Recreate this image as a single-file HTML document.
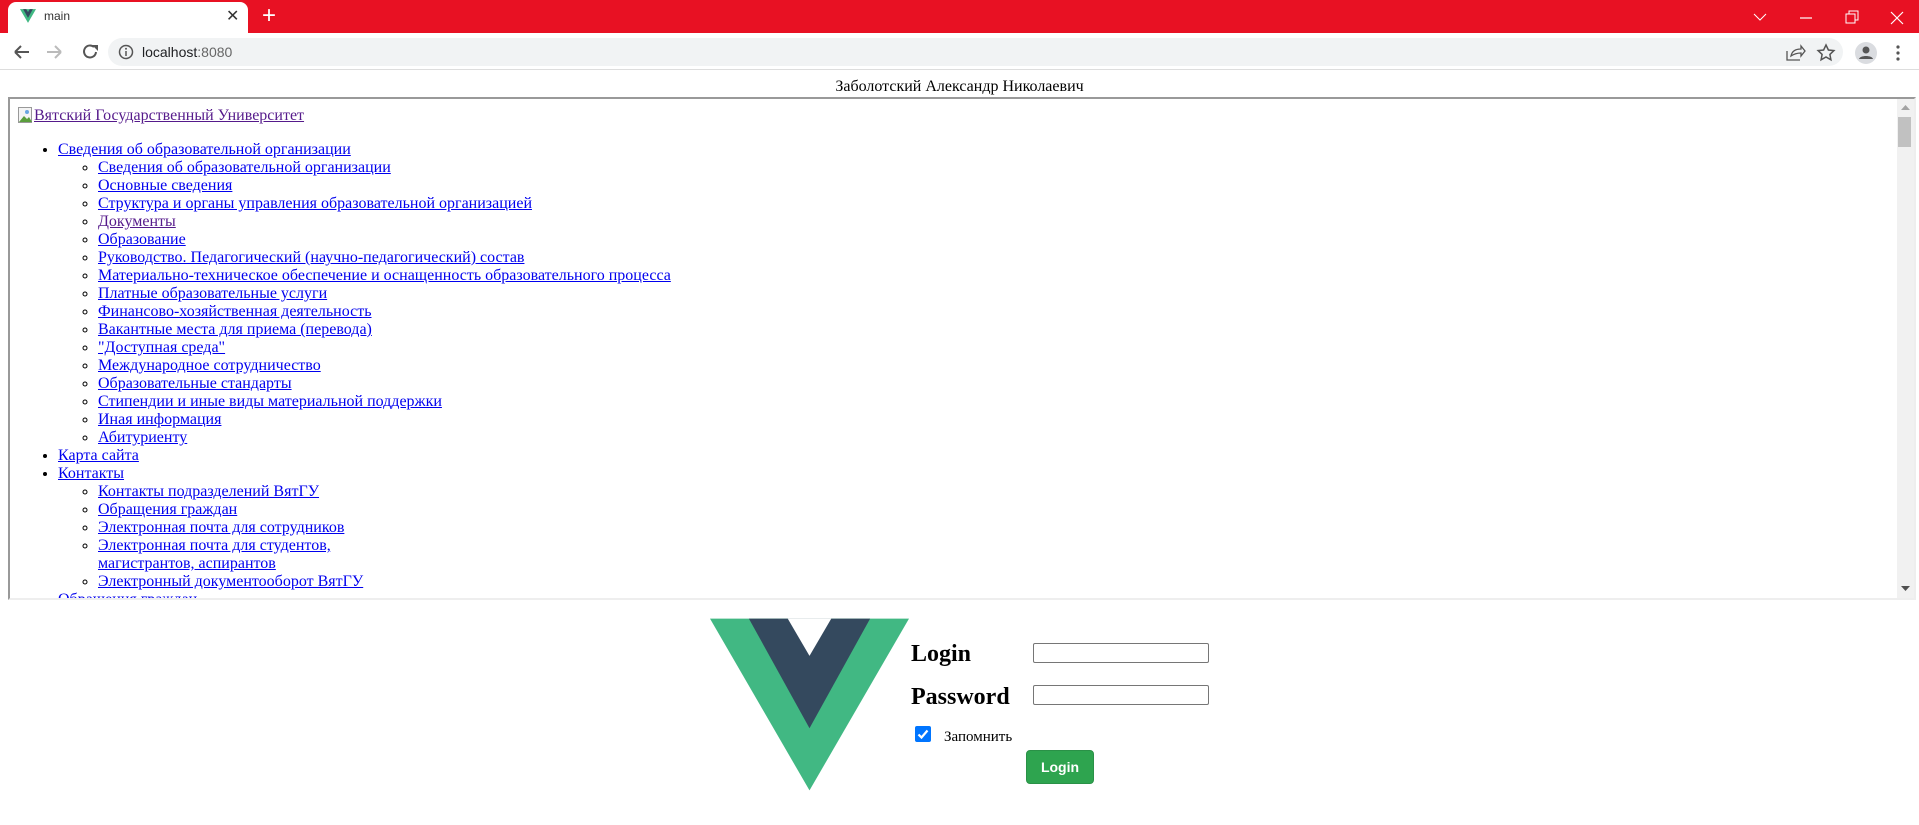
<!DOCTYPE html>
<html><head><meta charset="utf-8"><style>
*{box-sizing:border-box}
body{margin:0;width:1919px;height:825px;overflow:hidden;background:#fff;position:relative;font-family:"Liberation Serif",serif;font-size:16px}
.abs{position:absolute}
.chrome{font-family:"Liberation Sans",sans-serif}
a{color:#0000ee}
a.v{color:#551a8b}
ul{margin:0;padding-left:40px;line-height:18px}
.frame ul.top{margin:16px 0}
</style></head><body>
<div class="abs chrome" style="left:0;top:0;width:1919px;height:33px;background:#e81123"></div>
<div class="abs chrome" style="left:8px;top:2px;width:240px;height:32px;background:#fff;border-radius:8px 8px 0 0"></div>
<svg class="abs" style="left:20px;top:9px" width="16" height="14" viewBox="0 0 256 221"><path d="M0 0h256L128 221z" fill="#41b883"/><path d="M50 0h50l28 48 28-48h50L128 141z" fill="#34495e"/></svg>
<div class="abs chrome" style="left:44px;top:9px;font-size:12px;color:#333">main</div>
<div class="abs chrome" style="left:226px;top:6px;font-size:16px;color:#333">✕</div>
<div class="abs chrome" style="left:262px;top:2px;font-size:24px;color:#fff">+</div>
<svg class="abs" style="left:1750px;top:8px" width="170" height="20"><path d="M4 6l6 6 6-6" stroke="#fff" fill="none" stroke-width="1"/><path d="M50 10h12" stroke="#fff" stroke-width="1.2"/><rect x="96" y="6" width="9" height="9" stroke="#fff" fill="none"/><path d="M99 6V3h9v9h-3" stroke="#fff" fill="none"/><path d="M141 4l12 12M153 4l-12 12" stroke="#fff" stroke-width="1.2"/></svg>
<div class="abs" style="left:0;top:33px;width:1919px;height:37px;background:#fff;border-bottom:1px solid #ddd"></div>
<svg class="abs" style="left:12px;top:42px" width="90" height="20"><path d="M3 10h14M3 10l6-6M3 10l6 6" stroke="#555" stroke-width="2" fill="none"/><path d="M35 10h14M49 10l-6-6M49 10l-6 6" stroke="#bbb" stroke-width="2" fill="none"/><path d="M82 5a6 6 0 1 0 2 5" stroke="#555" stroke-width="2" fill="none"/><path d="M80 3h6v6z" fill="#555"/></svg>
<div class="abs" style="left:108px;top:38px;width:1735px;height:28px;background:#f1f3f4;border-radius:14px"></div>
<svg class="abs" style="left:118px;top:44px" width="16" height="16"><circle cx="8" cy="8" r="6.5" stroke="#555" stroke-width="1.5" fill="none"/><path d="M8 7v5" stroke="#555" stroke-width="1.5"/><circle cx="8" cy="4.8" r="1" fill="#555"/></svg>
<div class="abs chrome" style="left:142px;top:44px;font-size:14px;color:#202124">localhost<span style="color:#666">:8080</span></div>
<svg class="abs" style="left:1784px;top:42px" width="130" height="22"><path d="M3 9v9h13M7 14c1-5 5-7 10-7V4l4 5-4 5v-3c-4 0-7 1-10 3z" stroke="#555" fill="none" stroke-width="1.3"/><path d="M42 3l2.4 5 5.5.6-4 3.8 1 5.4L42 15l-4.9 2.8 1-5.4-4-3.8 5.5-.6z" stroke="#555" fill="none" stroke-width="1.5"/><circle cx="82" cy="11" r="11" fill="#dadce0"/><circle cx="82" cy="8" r="3.5" fill="#555"/><path d="M75 17c1-4 13-4 14 0z" fill="#555"/><g fill="#555"><circle cx="114" cy="5" r="1.6"/><circle cx="114" cy="11" r="1.6"/><circle cx="114" cy="17" r="1.6"/></g></svg>

<div class="abs" style="left:0;top:78px;width:1919px;text-align:center;line-height:18px">Заболотский Александр Николаевич</div>

<div class="abs frame" style="left:8px;top:97px;width:1908px;height:503px;border:2px solid;border-color:#999 #eee #eee #999;overflow:hidden">
<div style="padding:8px 0 0 8px">
<div style="line-height:18px"><a class="v" href="#"><svg width="16" height="16" style="vertical-align:-3px"><rect x="0.5" y="0.5" width="13" height="15" fill="#f4f4f4" stroke="#999"/><path d="M1 15l5-6 3 3 2-2 3 5z" fill="#5a9e3c"/><circle cx="9" cy="5" r="2" fill="#6aa6e0"/></svg>Вятский Государственный Университет</a></div>
<ul class="top">
<li><a href="#">Сведения об образовательной организации</a>
<ul style="list-style:circle">
<li><a href="#">Сведения об образовательной организации</a></li>
<li><a href="#">Основные сведения</a></li>
<li><a href="#">Структура и органы управления образовательной организацией</a></li>
<li><a class="v" href="#">Документы</a></li>
<li><a href="#">Образование</a></li>
<li><a href="#">Руководство. Педагогический (научно-педагогический) состав</a></li>
<li><a href="#">Материально-техническое обеспечение и оснащенность образовательного процесса</a></li>
<li><a href="#">Платные образовательные услуги</a></li>
<li><a href="#">Финансово-хозяйственная деятельность</a></li>
<li><a href="#">Вакантные места для приема (перевода)</a></li>
<li><a href="#">"Доступная среда"</a></li>
<li><a href="#">Международное сотрудничество</a></li>
<li><a href="#">Образовательные стандарты</a></li>
<li><a href="#">Стипендии и иные виды материальной поддержки</a></li>
<li><a href="#">Иная информация</a></li>
<li><a href="#">Абитуриенту</a></li>
</ul></li>
<li><a href="#">Карта сайта</a></li>
<li><a href="#">Контакты</a>
<ul style="list-style:circle">
<li><a href="#">Контакты подразделений ВятГУ</a></li>
<li><a href="#">Обращения граждан</a></li>
<li><a href="#">Электронная почта для сотрудников</a></li>
<li><a href="#">Электронная почта для студентов,<br>магистрантов, аспирантов</a></li>
<li><a href="#">Электронный документооборот ВятГУ</a></li>
</ul></li>
<li><a href="#">Обращения граждан</a></li>
</ul>
</div>
<div class="abs" style="right:0;top:0;width:17px;height:100%;background:#f1f1f1"></div>
<div class="abs" style="right:3px;top:18px;width:13px;height:30px;background:#c1c1c1"></div>
<svg class="abs" style="right:4px;top:6px" width="9" height="6"><path d="M0 5L4.5 0 9 5z" fill="#a3a3a3"/></svg>
<svg class="abs" style="right:4px;bottom:6px" width="9" height="6"><path d="M0 0L4.5 5 9 0z" fill="#505050"/></svg>
</div>

<svg class="abs" style="left:710px;top:618px" width="199" height="173" viewBox="0 0 256 221"><path d="M0 0H256L128 221z" fill="#41b883"/><path d="M50 0H206L128 141z" fill="#34495e"/><path d="M100 0H156L128 48z" fill="#fff"/><path d="M100 0H156L128 48z" fill="#fff" opacity="0"/></svg>
<div class="abs" style="left:911px;top:637px;font-size:24px;font-weight:bold;line-height:34px">Login</div>
<div class="abs" style="left:911px;top:680px;font-size:24px;font-weight:bold;line-height:34px">Password</div>
<div class="abs" style="left:1033px;top:643px;width:176px;height:20px;border:1px solid #767676;border-radius:2px"></div>
<div class="abs" style="left:1033px;top:685px;width:176px;height:20px;border:1px solid #767676;border-radius:2px"></div>
<svg class="abs" style="left:915px;top:726px" width="16" height="16"><rect width="16" height="16" rx="2" fill="#0075ff"/><path d="M3.5 8.5l3 3 6-7" stroke="#fff" stroke-width="2.2" fill="none"/></svg>
<div class="abs" style="left:944px;top:728px;font-size:15px;line-height:18px">Запомнить</div>
<div class="abs chrome" style="left:1026px;top:750px;width:68px;height:34px;background:#2ea44f;border:1px solid #2a9147;border-radius:4px;color:#fff;font-weight:bold;font-size:14px;text-align:center;line-height:32px">Login</div>
</body></html>
